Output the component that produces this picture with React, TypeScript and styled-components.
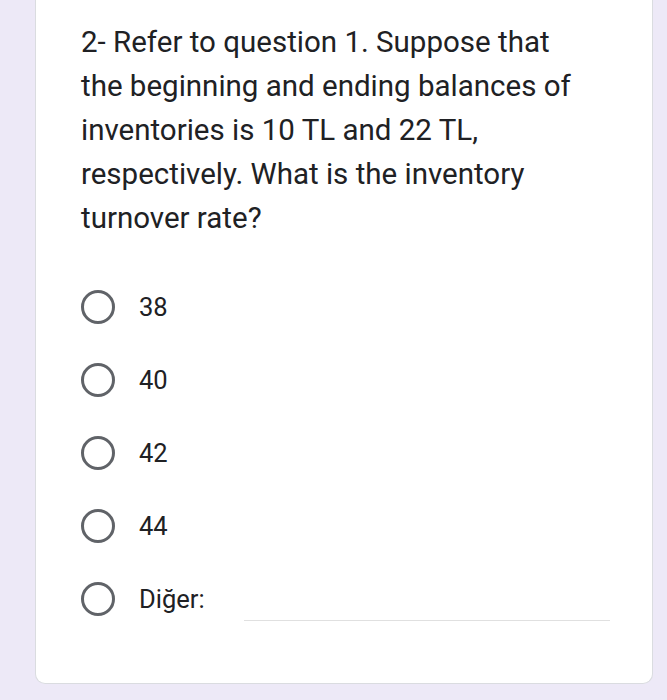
import React from "react";
import styled, { createGlobalStyle } from "styled-components";

const Global = createGlobalStyle`
  html, body { margin: 0; padding: 0; background: #ede9f7; }
  body { font-family: Roboto, "Noto Sans", Arial, sans-serif; }
`;

const Page = styled.div`
  width: 667px;
  height: 700px;
  box-sizing: border-box;
  padding: 0 14px 16px 35px;
  display: flex;
  flex-direction: column;
`;

const Card = styled.div`
  flex: 1;
  background: #ffffff;
  border: 1px solid #dadce0;
  border-top: none;
  border-radius: 0 0 10px 10px;
  padding: 20px 40px 0 45px;
  box-sizing: border-box;
`;

const Question = styled.div`
  font-size: 29.5px;
  line-height: 44px;
  color: #202124;
  max-width: 508px;
`;

const Options = styled.div`
  margin-top: 50px;
  display: flex;
  flex-direction: column;
  gap: 39px;
`;

const Option = styled.label`
  display: flex;
  align-items: center;
  height: 34px;
`;

const Radio = styled.span`
  width: 34px;
  height: 34px;
  box-sizing: border-box;
  border: 3.5px solid #606368;
  border-radius: 50%;
  flex: none;
`;

const OptionText = styled.span`
  margin-left: 24px;
  font-size: 25.5px;
  color: #202124;
`;

const OtherInput = styled.span`
  margin-left: 39px;
  align-self: flex-end;
  margin-bottom: -5px;
  flex: 1;
  margin-right: 2px;
  border-bottom: 1.5px solid #e0e0e0;
`;

export default function App() {
  const opts = ["38", "40", "42", "44"];
  return (
    <>
      <Global />
      <Page>
        <Card>
          <Question>
            2- Refer to question 1. Suppose that the beginning and ending balances of inventories is 10 TL and 22 TL, respectively. What is the inventory turnover rate?
          </Question>
          <Options>
            {opts.map((o) => (
              <Option key={o}>
                <Radio />
                <OptionText>{o}</OptionText>
              </Option>
            ))}
            <Option>
              <Radio />
              <OptionText>Diğer:</OptionText>
              <OtherInput />
            </Option>
          </Options>
        </Card>
      </Page>
    </>
  );
}
